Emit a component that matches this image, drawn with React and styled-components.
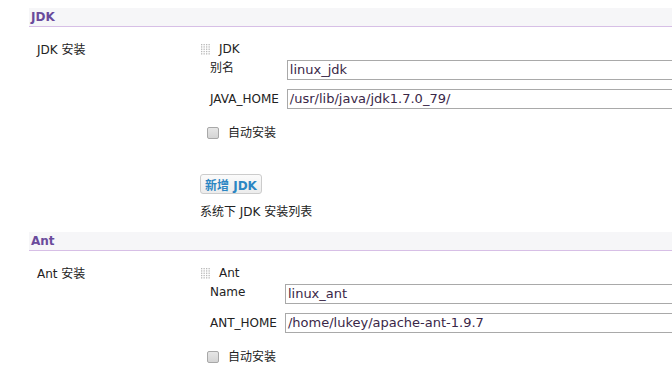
import React from 'react';
import styled, { createGlobalStyle } from 'styled-components';

const GlobalStyle = createGlobalStyle`
    html, body {
        margin: 0;
        padding: 0;
        background: #ffffff;
        overflow: hidden;
    }
    body {
        font-family: "DejaVu Sans", Verdana, "Noto Sans CJK SC", sans-serif;
        font-size: 12px;
        line-height: 14px;
        color: #222222;
    }
`

const Page = styled.div`
    padding: 8px 0 0 29px;
    overflow: hidden;
`

const SectionHeader = styled.div`
    height: 18px;
    line-height: 18px;
    padding-left: 2px;
    background: #f6f6f8;
    border-bottom: 1px solid #d7bfe6;
    font-weight: bold;
    font-size: 12px;
    color: #6a4b9c;
`

const SectionRow = styled.div`
    display: grid;
    grid-template-columns: 171px 1fr;
    padding-top: ${props => props.top}px;
`

const RowLabel = styled.div`
    padding-left: 8px;
    padding-top: 1px;
`

const Block = styled.div`
    display: flex;
    flex-direction: column;
    overflow: hidden;
`

const RepeatHead = styled.div`
    display: flex;
    align-items: center;
    gap: 8px;
    height: 14px;
`

const FieldGrid = styled.div`
    display: grid;
    grid-template-columns: auto 1fr;
    column-gap: 8px;
    row-gap: 9px;
    padding-left: 10px;
    margin-top: 4px;
`

const FieldLabel = styled.div`
    padding-top: ${props => props.offset}px;
    white-space: nowrap;
`

const TextBox = styled.div`
    height: 18px;
    line-height: 18px;
    width: 600px;
    border: 1px solid #a9a9a9;
    padding-left: 2px;
    color: #3a2748;
    font-size: 13px;
    white-space: nowrap;
`

const CheckRow = styled.label`
    display: flex;
    align-items: center;
    gap: 9px;
    margin-top: 17px;
    padding-left: 7px;
`

const CheckBox = styled.span`
    width: 10px;
    height: 10px;
    border: 1px solid #a8a8a8;
    border-radius: 2px;
    background: linear-gradient(#e6e6e6, #d4d4d4);
`

const AddButton = styled.button`
    align-self: flex-start;
    margin-top: 34px;
    height: 20px;
    padding: 0 4px;
    border: 1px solid #cccccc;
    border-radius: 3px;
    background: linear-gradient(#fbfbfb, #ececec);
    color: #2b86c3;
    font-family: "DejaVu Sans", Verdana, "Noto Sans CJK SC", sans-serif;
    font-weight: bold;
    font-size: 12px;
`

const Hint = styled.div`
    margin-top: 11px;
`

const Spacer = styled.div`
    height: 13px;
`

const Handle = () => (
    <svg width="11" height="12" viewBox="0 0 11 12">
        {[0, 1, 2, 3, 4].map(r =>
            [0, 1, 2, 3].map(c => (
                <rect key={r + '-' + c} x={1 + c * 2.5} y={1 + r * 2.3} width="1.3" height="1.3" fill="#b8b8b8" />
            ))
        )}
    </svg>
)

const Tool = ({ title, rowLabel, fields, top, children }) => (
    <>
        <SectionHeader>{title}</SectionHeader>
        <SectionRow top={top}>
            <RowLabel>{rowLabel}</RowLabel>
            <Block>
                <RepeatHead>
                    <Handle />
                    <span>{title}</span>
                </RepeatHead>
                <FieldGrid>
                    {fields.map(f => (
                        <React.Fragment key={f.label}>
                            <FieldLabel offset={f.offset}>{f.label}</FieldLabel>
                            <TextBox>{f.value}</TextBox>
                        </React.Fragment>
                    ))}
                </FieldGrid>
                <CheckRow>
                    <CheckBox />
                    <span>自动安装</span>
                </CheckRow>
                {children}
            </Block>
        </SectionRow>
    </>
)

export default function App() {
    return (
        <Page>
            <GlobalStyle />
            <Tool
                title="JDK"
                rowLabel="JDK 安装"
                top={15}
                fields={[
                    { label: '别名', value: 'linux_jdk', offset: 1 },
                    { label: 'JAVA_HOME', value: '/usr/lib/java/jdk1.7.0_79/', offset: 3 },
                ]}
            >
                <AddButton>新增 JDK</AddButton>
                <Hint>系统下 JDK 安装列表</Hint>
            </Tool>
            <Spacer />
            <Tool
                title="Ant"
                rowLabel="Ant 安装"
                top={15}
                fields={[
                    { label: 'Name', value: 'linux_ant', offset: 1 },
                    { label: 'ANT_HOME', value: '/home/lukey/apache-ant-1.9.7', offset: 3 },
                ]}
            />
        </Page>
    );
}
